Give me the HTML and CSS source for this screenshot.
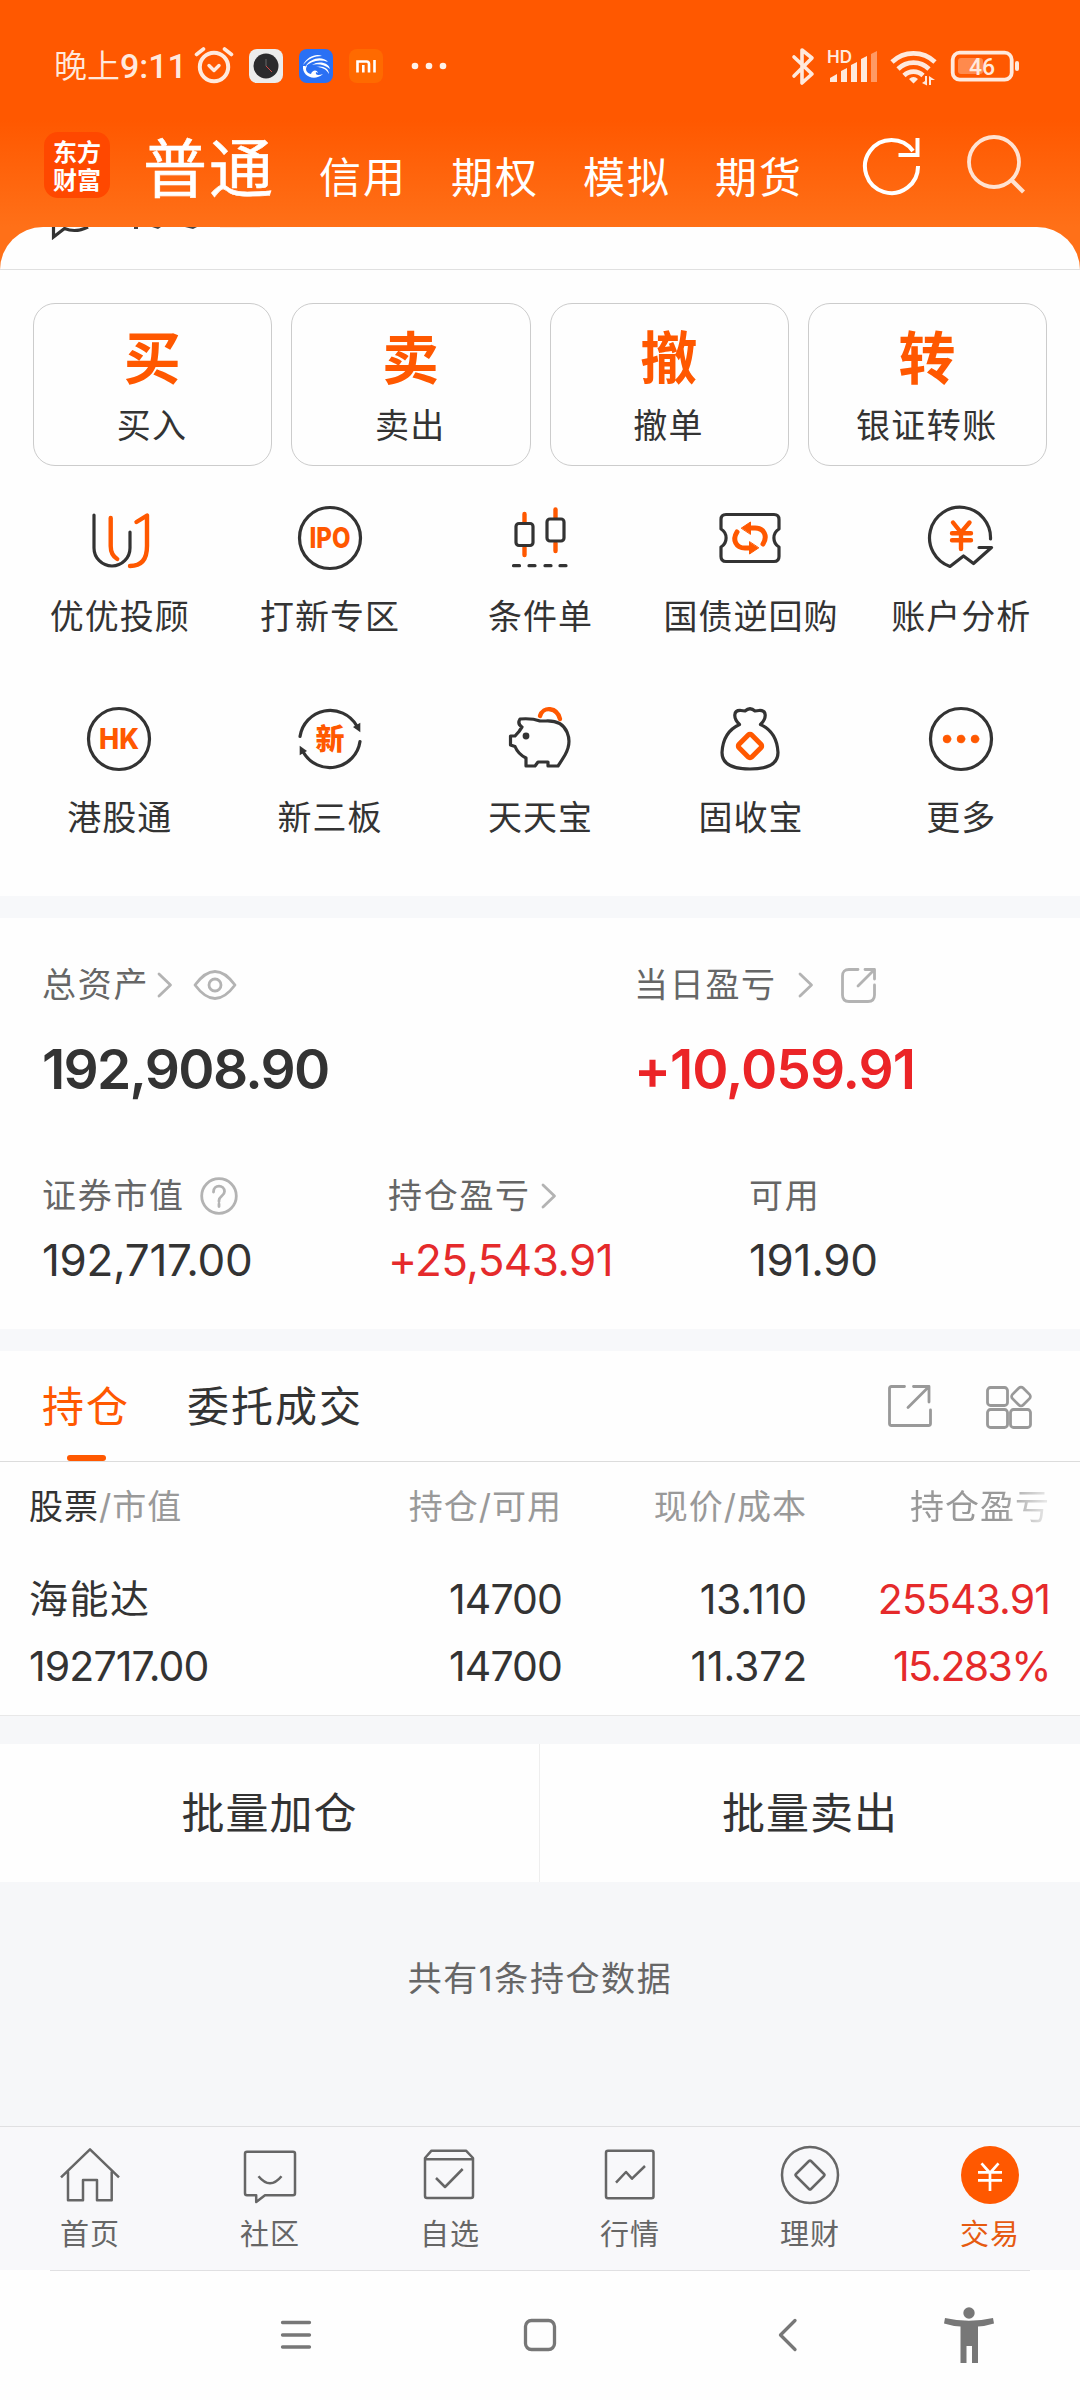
FILE: index.html
```html
<!DOCTYPE html>
<html lang="zh-CN">
<head>
<meta charset="utf-8">
<title>交易</title>
<link rel="stylesheet" href="styles.css">
</head>
<body>
<div class="screen">
  <header class="top">
    <div class="status">
      <span class="clock">晚上<b>9:11</b></span>
      <svg class="alarm" width="40" height="38" viewBox="0 0 40 38" fill="none" stroke="#ffe9dd" stroke-width="4" stroke-linecap="round"><circle cx="20" cy="21" r="14.2"/><path d="M2.500 8.500 9.500 3M37.500 8.500 30.500 3" stroke-width="3.600"/><path d="m15 19.500 5 5 5-5" stroke-width="3.400" stroke-linejoin="round"/></svg>
      <svg class="app" width="34" height="34" viewBox="0 0 34 34"><rect width="34" height="34" rx="8" fill="#ececec"/><circle cx="17" cy="17" r="12.500" fill="#2b2b2d"/><path d="M17 10v7" stroke="#555" stroke-width="1.500"/><path d="m17 17 6 6" stroke="#d04848" stroke-width="1"/></svg>
      <svg class="app" width="34" height="34" viewBox="0 0 34 34"><rect width="34" height="34" rx="8" fill="#2a70f4"/><path d="M4 16C8 7 18 4 23 7 15 7 9 10 4 16ZM6 18C12 8 24 7 29 13 20 10 12 12 6 18ZM4 17C3 27 15 33 24 25 19 27 16 26 17 23L19 24C18 20 13 21 12 25 7 24 6 20 8 17ZM13 16C20 11 30 14 31 20 26 16 19 14 13 16ZM17 18C23 16 30 19 30 25 27 20 23 18 17 18Z" fill="#fff"/></svg>
      <svg class="app" width="34" height="34" viewBox="0 0 34 34"><rect width="34" height="34" rx="8" fill="#ff6a00"/><path d="M8.500 23.500V12.500h9q2.500 0 2.500 2.500v8.500M14.300 16v7.500M25.500 11v12.500" fill="none" stroke="#fff" stroke-width="2.600"/></svg>
      <svg class="dots" width="36" height="8" viewBox="0 0 36 8" fill="#fff1e9"><circle cx="4" cy="4" r="3.300"/><circle cx="18" cy="4" r="3.300"/><circle cx="32" cy="4" r="3.300"/></svg>
      <svg class="radios" width="232" height="42" viewBox="0 0 232 42" fill="none" stroke="#ffe9dd">
        <path d="m4 12 18 17-10 9V5l10 8L4 31" stroke-width="3.600" stroke-linejoin="round" stroke-linecap="round"/>
        <g fill="#ffe9dd" stroke="none"><path d="M40 37v-4l7-4v8zM51 37V26l6-3v14zM61 37V20l6-3v20zM71 37V14l6-3v26z"/><path d="M81 37V9l6-3v31z" opacity=".45"/></g>
        <text x="37" y="18" class="hd" textLength="25">HD</text>
        <g stroke-width="4.600"><path d="M102 17a31 31 0 0 1 43 0M108 24a22 22 0 0 1 31 0M114 30.500a13.500 13.500 0 0 1 19 0"/></g>
        <path d="m119 34q4.500-4 9 0l-4.500 4.500zM132 38l5 2.500V31h-2v5zM139 40v-9l6 4h-4v5z" fill="#ffe9dd" stroke="none"/>
        <rect x="162.700" y="7.700" width="59" height="27" rx="7" stroke-width="3.800"/>
        <rect x="168" y="13" width="25" height="16" rx="3" fill="#ff8a4d" stroke="none"/>
        <rect x="225" y="16" width="4" height="10" rx="2" fill="#ffe9dd" stroke="none"/>
        <text x="179" y="29.500" class="pct" textLength="26">46</text>
      </svg>
    </div>
    <div class="nav">
      <div class="logo">东方<br>财富</div>
      <span class="mode on">普通</span>
      <span class="mode">信用</span><span class="mode">期权</span><span class="mode">模拟</span><span class="mode">期货</span>
      <svg class="refresh" width="60" height="62" viewBox="0 0 60 62" fill="none" stroke="#fff" stroke-width="4"><path d="M56 32A26.500 26.500 0 1 1 51 17"/><path d="M55.500 4v17H36.500"/></svg>
      <svg class="search" width="60" height="62" viewBox="0 0 60 62" fill="none" stroke="#ffe2d1" stroke-width="3.800"><circle cx="28" cy="29" r="25"/><path d="m44.500 46 13 13" stroke-width="4.300"/></svg>
    </div>
  </header>

  <section class="sheet">
    <svg class="peek" width="300" height="14" viewBox="0 0 300 14"><path d="M53.500 0v10l11-8.500C73 5 82 3 88 0" fill="none" stroke="#333" stroke-width="3.200"/><path d="M134 0h4v2h-4zM152 0h9l-3 2zM185 0h12l-4 2z" fill="#444"/><path d="M220 0h40" stroke="#ffcfb8" stroke-width="1"/></svg>
  </section>

  <section class="cards">
    <div class="card"><b>买</b><span>买入</span></div>
    <div class="card"><b>卖</b><span>卖出</span></div>
    <div class="card"><b>撤</b><span>撤单</span></div>
    <div class="card"><b>转</b><span>银证转账</span></div>
  </section>

  <section class="tools">
    <div class="tool"><svg class="ic" viewBox="0 0 72 72"><path d="M11 13V46a18 18 0 0 0 36 0V30"/><path class="o" d="M27.700 16V44q0 9 6.500 13M53.500 20 64 13.500V44q0 20-17 20"/></svg><span>优优投顾</span></div>
    <div class="tool"><svg class="ic" viewBox="0 0 72 72"><circle cx="36" cy="36" r="30.500"/><text x="15.500" y="46" textLength="41" lengthAdjust="spacingAndGlyphs">IPO</text></svg><span>打新专区</span></div>
    <div class="tool"><svg class="ic" viewBox="0 0 72 72"><path class="o" d="M20.500 12v8M20.500 45.500V53M51.500 7.500v8M51.500 41v8"/><rect x="12" y="21.500" width="17" height="22" rx="3"/><rect x="43" y="17" width="17" height="22" rx="3"/><path d="M9.500 63.700h6M25 63.700h6M41 63.700h6M56 63.700h6"/></svg><span>条件单</span></div>
    <div class="tool"><svg class="ic" viewBox="0 0 72 72"><path d="M12 12.500H60q5 0 5 5V27a10.500 10.500 0 0 0 0 18v9.500q0 5-5 5H12q-5 0-5-5V45a10.500 10.500 0 0 0 0-18V17.500q0-5 5-5Z"/><g id="swap"><path class="o w" d="M49 42C54 34 50 26 41 26H36"/><path class="of" d="m27.500 26 9-6v12z"/></g><use href="#swap" transform="rotate(180 36 36)"/></svg><span>国债逆回购</span></div>
    <div class="tool"><svg class="ic" viewBox="0 0 72 72"><path d="M65.500 37A30.500 30.500 0 1 0 25 64.500L38.500 54l10 7.500L66.500 45.500H54"/><path class="o" d="m28 20.500 8 10 8.500-10M36 30.500V47M27 31.300H46M27 38.300H46"/></svg><span>账户分析</span></div>
    <div class="tool"><svg class="ic" viewBox="0 0 72 72"><circle cx="36" cy="36" r="30.500"/><text x="16" y="46" textLength="40" lengthAdjust="spacingAndGlyphs">HK</text></svg><span>港股通</span></div>
    <div class="tool"><svg class="ic" viewBox="0 0 72 72"><g id="half"><path d="M6 33.500A30.500 30.500 0 0 1 62.500 22.500"/><path d="m59 24 7.300-4.200v9.500z" fill="#333" stroke="none"/></g><use href="#half" transform="rotate(180 36 36)"/><text class="xin" x="21.500" y="46.500">新</text></svg><span>新三板</span></div>
    <div class="tool"><svg class="ic" viewBox="0 0 72 72"><path class="o" d="M36 13c3-10 17-9 20 3"/><path d="M36 18Q28 15 16 16 13 21 18 24L15 28.500 11 33H6.500v9L11 43.500Q14 51 22 55v8H31l3-4h10v4H54Q58 57 61 52C69 38 65 17 42 18Z"/><circle cx="22" cy="33" r="3.400" fill="#333" stroke="none"/></svg><span>天天宝</span></div>
    <div class="tool"><svg class="ic" viewBox="0 0 72 72"><path d="M25.500 21.500C19 15 19 7 27 7.500L31 8Q36 3.500 41 8L45 7.500C53 7 53 15 46.500 21.500Q63 29 64 49.500C64 61 53 66 36 66S8 61 8 49.500Q9 29 25.500 21.500Z"/><rect class="o w" x="27" y="34" width="18" height="18" rx="2.500" transform="rotate(45 36 43)"/></svg><span>固收宝</span></div>
    <div class="tool"><svg class="ic" viewBox="0 0 72 72"><circle cx="36" cy="36" r="30.500"/><g class="of"><circle cx="22" cy="36" r="3.800"/><circle cx="36" cy="36" r="3.800"/><circle cx="50" cy="36" r="3.800"/></g></svg><span>更多</span></div>
  </section>

  <section class="assets">
    <div class="pair">
      <div class="a1"><div class="lab">总资产<svg class="chev c1" viewBox="0 0 16 26"><path d="m2 2 11.500 11L2 24"/></svg><svg class="eye" width="44" height="32" viewBox="0 0 44 32"><path d="M2 16Q12 2.500 22 2.500T42 16Q32 29.500 22 29.500T2 16Z"/><circle cx="22" cy="16" r="6"/></svg></div><div class="big">192,908.90</div></div>
      <div class="a2"><div class="lab">当日盈亏<svg class="chev c2" viewBox="0 0 16 26"><path d="m2 2 11.500 11L2 24"/></svg><svg class="share" width="37" height="37" viewBox="0 0 37 37"><path d="M18 2.500H9Q2.500 2.500 2.500 9V28q0 6.500 6.500 6.500H28q6.500 0 6.500-6.500V18M25 2.500h9.500V12M34 3 18 19"/></svg></div><div class="big red">+10,059.91</div></div>
    </div>
    <div class="trio">
      <div class="b1"><div class="lab">证券市值<svg class="help" width="38" height="38" viewBox="0 0 38 38"><circle cx="19" cy="19" r="17.300"/><path d="M13.500 15c0-8 11-7.500 11-.5 0 4.500-5.500 4.500-5.500 9v1M19 27v2.500"/></svg></div><div class="num">192,717.00</div></div>
      <div class="b2"><div class="lab">持仓盈亏<svg class="chev c3" viewBox="0 0 16 26"><path d="m2 2 11.500 11L2 24"/></svg></div><div class="num red">+25,543.91</div></div>
      <div class="b3"><div class="lab">可用</div><div class="num">191.90</div></div>
    </div>
  </section>

  <section class="hold">
    <div class="tabs">
      <span class="tab on">持仓</span><span class="tab">委托成交</span>
      <svg class="t1" width="46" height="46" viewBox="0 0 46 46"><path d="M18.500 3.500H5.500q-2 0-2 2v35q0 2 2 2h37q2 0 2-2V27M27.500 3.500H43V19M42.500 4 22 24.500"/></svg>
      <svg class="t2" width="50" height="48" viewBox="0 0 50 48"><rect x="3.500" y="4.500" width="20" height="18" rx="3"/><rect x="3.500" y="26.500" width="20" height="18" rx="3"/><rect x="26.500" y="26.500" width="20" height="18" rx="3"/><rect x="29.500" y="6" width="15" height="15" rx="3" transform="rotate(45 37 13.500)"/></svg>
    </div>
    <div class="row head"><span><em>股票</em>/市值</span><span>持仓/可用</span><span>现价/成本</span><span class="fade">持仓盈亏</span></div>
    <div class="row"><span class="name">海能达</span><span>14700</span><span class="price">13.110</span><span class="red">25543.91</span></div>
    <div class="row last"><span>192717.00</span><span>14700</span><span class="price">11.372</span><span class="red rate">15.283%</span></div>
  </section>

  <section class="batch"><div>批量加仓</div><div>批量卖出</div></section>
  <div class="summary">共有1条持仓数据</div>

  <nav class="tabbar">
    <div><svg viewBox="0 0 64 64"><path d="M3 34.300 32 6.300 61 34.300M10 28.500V57.300H25V37H39V57.300H53.700V28.500"/></svg>首页</div>
    <div><svg viewBox="0 0 64 64"><path d="M9 8.700H55q2 0 2 2V50.300q0 2-2 2H27L18.200 59V52.300H9q-2 0-2-2V10.700q0-2 2-2ZM20.500 33.300q11.500 14 23 0"/></svg>社区</div>
    <div><svg viewBox="0 0 64 64"><path d="M7 15 13.500 7.700H48L55 15V53q0 2-2 2H9q-2 0-2-2ZM7 16.300H55M18 35l9 9L44.700 26"/></svg>自选</div>
    <div><svg viewBox="0 0 64 64"><rect x="8" y="7.700" width="47.500" height="47.500" rx="2"/><path d="M18 39.700 28 29l6 6.700L47 23"/></svg>行情</div>
    <div><svg viewBox="0 0 64 64"><circle cx="32" cy="32" r="28"/><path d="m31 18q1-1 2 0L46 31q1 1 0 2L33 46q-1 1-2 0L18 33q-1-1 0-2Z"/></svg>理财</div>
    <div class="on"><svg viewBox="0 0 64 64"><circle cx="32" cy="32" r="29" fill="#ff5800" stroke="none"/><path d="m23.500 20.300 8.500 9.700 8.500-9.700M32 30V48M20 29.300H44M20 37.300H44" stroke="#fff" stroke-width="2.700"/></svg>交易</div>
  </nav>
  <footer class="sys">
    <svg class="s1" width="32" height="32" viewBox="0 0 32 32"><path d="M2.500 3.500h27M2.500 16h27M2.500 28h27"/></svg>
    <svg class="s2" width="36" height="36" viewBox="0 0 36 36"><rect x="3.500" y="3.500" width="29" height="29" rx="6"/></svg>
    <svg class="s3" width="22" height="36" viewBox="0 0 22 36"><path d="M18 3.500 3.500 18 18 32.500"/></svg>
    <svg class="s4" width="52" height="58" viewBox="0 0 52 58"><circle cx="26" cy="7" r="5.700"/><path d="M2 12Q26 17.500 50 12L51 17.500Q43 20 35 20.500V57H29V40H23.500V57H17.500V20.500Q9 20 1 17.500Z"/></svg>
  </footer>
</div>
</body>
</html>
```
FILE: styles.css
```css
* { box-sizing: border-box; }
body { margin: 0; background: #fff; }
svg { display: block; flex: none; }
.screen {
  width: 1080px;
  height: 2400px;
  overflow: hidden;
  background: #fefefe;
  color: #333;
  font-family: Inter, "Noto Sans CJK SC", sans-serif;
  font-size: 34px;
  line-height: 48px;
  white-space: nowrap;
}
.red { color: #e52a2b; }

/* header */
.top {
  height: 269px;
  margin-bottom: -42px;
  background: linear-gradient(#ff5800 120px, #ff7018 227px);
}
.status { display: flex; align-items: center; height: 132px; padding-left: 54px; color: #ffe9dd; }
.clock { width: 140px; font-size: 33px; font-weight: 350; }
.clock b { font: 500 34px/48px Roboto, sans-serif; }
.alarm { margin-top: -2px; }
.app { margin-left: 15px; }
.app + .app { margin-left: 16px; }
.dots { margin-left: 28px; }
.radios { margin-left: 343px; }
.hd { font: 600 17px Inter, sans-serif; fill: #ffe9dd; stroke: none; }
.pct { font: 500 23px Roboto, sans-serif; fill: #ffe9dd; stroke: none; }
.nav { display: flex; height: 95px; padding-left: 44px; color: #fff; }
.logo {
  width: 66px;
  height: 66px;
  padding-top: 5px;
  border-radius: 14px;
  background: #ff4800;
  text-align: center;
  font: 700 24px/28px "Noto Sans CJK SC", sans-serif;
}
.mode { width: 132px; padding-top: 22px; font-size: 42px; letter-spacing: 2px; }
.mode.on { width: 176px; margin-left: 33px; padding-top: 13px; font-size: 64px; font-weight: 400; -webkit-text-stroke: 0.6px #fff; }
.refresh { margin-left: 15px; margin-top: 2px; }
.search { margin-left: 44px; margin-top: 1px; }

.sheet {
  height: 43px;
  border-bottom: 1px solid #e0e0e0;
  background: #fefefe;
  clip-path: inset(0 round 44px 44px 0 0);
}

/* trade shortcuts */
.cards { display: grid; grid-template-columns: repeat(4, 1fr); gap: 19px; padding: 33px 33px 0; }
.card {
  display: flex;
  flex-direction: column;
  align-items: center;
  height: 163px;
  padding: 31px 1px 0 0;
  border: 1px solid #ccc;
  border-radius: 22px;
  letter-spacing: 1.5px;
}
.card b { height: 67px; font-size: 57px; font-weight: 700; color: #ff5800; letter-spacing: 0; }

.tools { display: grid; grid-template-columns: repeat(5, 1fr); grid-auto-rows: 201px; height: 430px; padding: 36px 14px 0; }
.tool { display: flex; flex-direction: column; align-items: center; letter-spacing: 1px; }
.tool span { padding-left: 1px; }
.ic { width: 72px; height: 72px; margin-bottom: 19px; fill: none; stroke: #333; stroke-width: 3.2; stroke-linecap: round; stroke-linejoin: round; }
.ic .o { stroke: #ff5800; stroke-width: 4.4; }
.ic .w { stroke-width: 5; }
.ic .of { fill: #ff5800; stroke: #ff5800; stroke-width: 1; }
.ic text { font: 800 28px Inter, sans-serif; fill: #ff5800; stroke: none; letter-spacing: 0; }
.ic text.xin { font: 900 29px "Noto Sans CJK SC", sans-serif; }

/* assets */
.assets { height: 433px; border-top: 22px solid #f7f8fa; padding: 43px 0 0 42px; }
.assets svg { fill: none; stroke: #b3b3b3; stroke-width: 2.8; stroke-linecap: round; stroke-linejoin: round; }
.pair, .trio { display: flex; }
.trio { margin-top: 79px; }
.a1 { width: 592px; }
.b1 { width: 346px; }
.b2 { width: 361px; }
.lab { display: flex; align-items: center; color: #666; letter-spacing: 1.7px; }
.chev { width: 16px; height: 26px; }
.c1 { margin-left: 8px; }
.c2 { margin-left: 21px; }
.c3 { margin-left: 10px; }
.eye { margin-left: 20px; }
.share { margin-left: 26px; }
.help { margin-left: 15px; }
.big { margin-top: 36px; font-size: 55px; font-weight: 600; letter-spacing: -1.7px; }
.big.red { color: #eb2427; letter-spacing: -1px; }
.num { margin-top: 16px; font-size: 44px; letter-spacing: -0.3px; }
.num.red { letter-spacing: -0.6px; }

/* holdings */
.hold { height: 387px; border-top: 22px solid #f7f8fa; border-bottom: 1px solid #e8e8e8; }
.tabs { display: flex; height: 111px; padding: 32px 0 0 42px; border-bottom: 1px solid #dcdcdc; }
.tab { height: 78px; margin-right: 57px; font-size: 42px; letter-spacing: 2px; }
.tab.on { color: #ff5800; }
.tab.on::after { content: ""; display: block; width: 39px; height: 6px; margin: 24px auto 0; border-radius: 3px; background: #ff5800; }
.tabs svg { fill: none; stroke: #999; stroke-width: 2.8; stroke-linejoin: round; stroke-linecap: round; }
.t1 { margin-left: auto; }
.t2 { margin: 0 46px 0 52px; }
.row { display: grid; grid-template-columns: 300px 233px 245px 243px; height: 67px; padding-left: 29px; font-size: 41px; letter-spacing: -0.9px; text-align: right; }
.row > :first-child { text-align: left; }
.row.head { height: 113px; padding-top: 21px; color: #999; font-size: 34px; letter-spacing: 1px; }
.row em { font-style: normal; color: #333; }
.row .name { font-size: 39px; letter-spacing: 1.5px; }
.row .price { letter-spacing: -0.2px; }
.row .rate { letter-spacing: -1.6px; }
.fade { -webkit-mask: linear-gradient(90deg, #000 196px, transparent 252px); mask: linear-gradient(90deg, #000 196px, transparent 252px); }

.batch { display: flex; height: 166px; border-top: 28px solid #f6f7f9; font-size: 43px; letter-spacing: 1px; line-height: 139px; text-align: center; }
.batch div { flex: 0 0 539px; }
.batch div + div { flex: 1; border-left: 1px solid #eee; }
.summary { height: 244px; padding-top: 73px; background: #f6f7f9; color: #666; text-align: center; letter-spacing: 1.6px; }

.tabbar { display: flex; height: 144px; padding-top: 16px; border-top: 1px solid #e0e0e2; background: #f8f8fa; }
.tabbar div { width: 180px; display: flex; flex-direction: column; align-items: center; font-size: 29px; line-height: 55px; letter-spacing: 1px; color: #666; }
.tabbar svg { width: 64px; height: 64px; fill: none; stroke: #666; stroke-width: 2.5; stroke-linejoin: round; }
.tabbar .on { color: #e65a10; }
.sys { display: flex; align-items: center; height: 129px; margin: 0 50px; border-top: 1px solid #e0e0e2; fill: none; stroke: #777; stroke-width: 3.3; stroke-linecap: round; stroke-linejoin: round; }
.s1 { margin-left: 230px; }
.s2 { margin-left: 210px; }
.s3 { margin-left: 219px; }
.s4 { margin-left: 144px; fill: #777; stroke: none; }
```
